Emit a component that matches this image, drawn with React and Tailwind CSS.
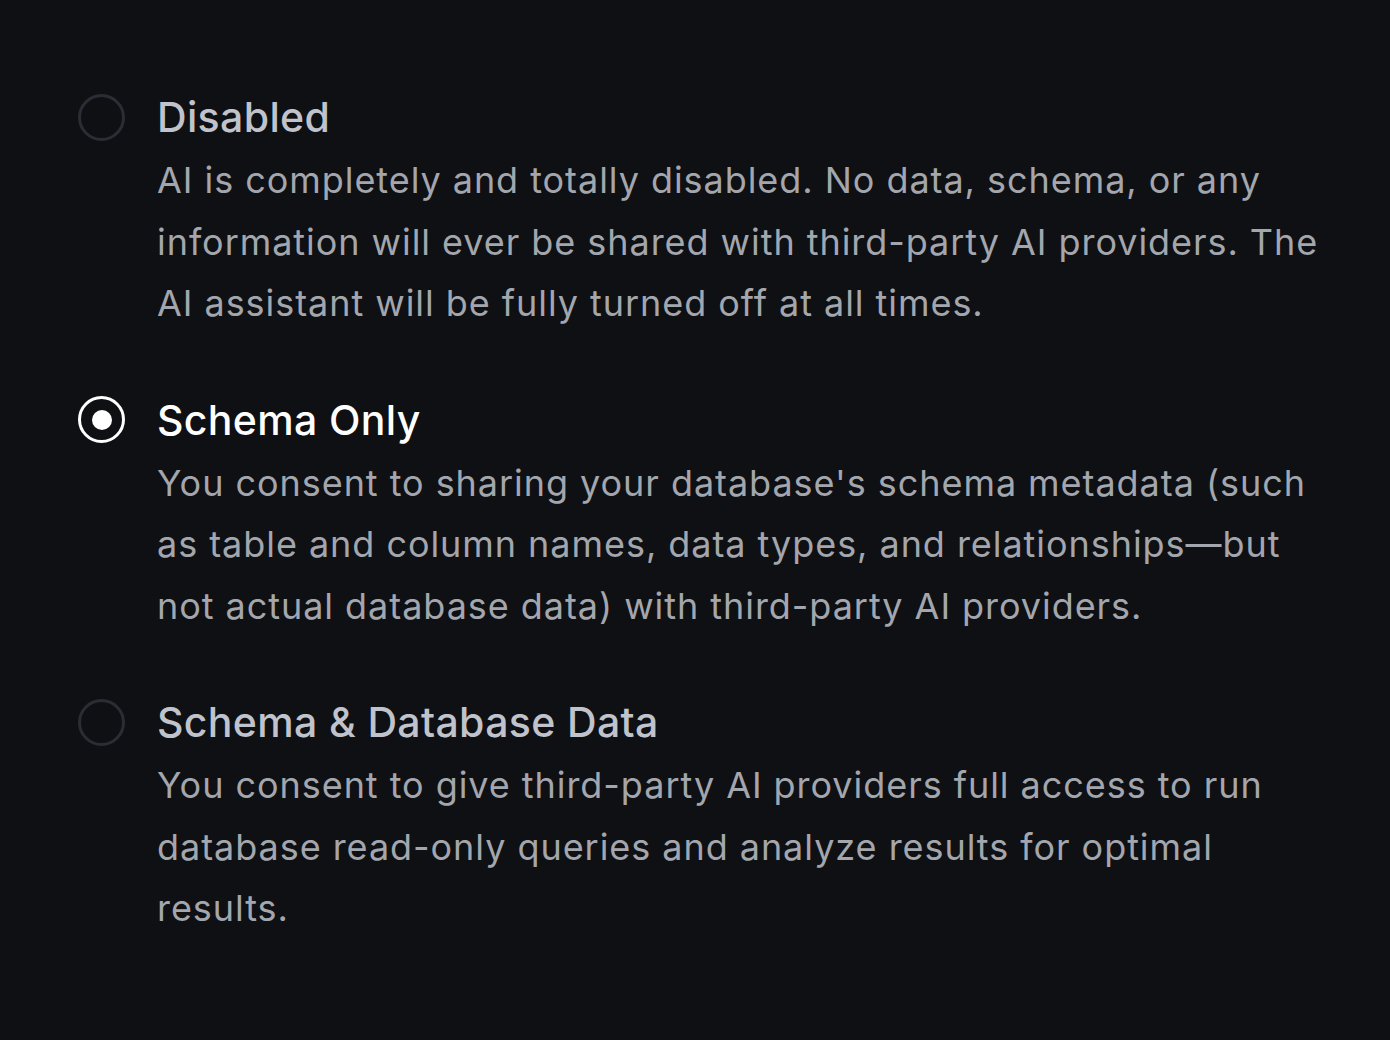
import React from "react";

const options = [
  {
    title: "Disabled",
    desc: "AI is completely and totally disabled. No data, schema, or any information will ever be shared with third-party AI providers. The AI assistant will be fully turned off at all times.",
    selected: false,
  },
  {
    title: "Schema Only",
    desc: "You consent to sharing your database's schema metadata (such as table and column names, data types, and relationships—but not actual database data) with third-party AI providers.",
    selected: true,
  },
  {
    title: "Schema & Database Data",
    desc: "You consent to give third-party AI providers full access to run database read-only queries and analyze results for optimal results.",
    selected: false,
  },
];

function Radio({ selected }) {
  return selected ? (
    <div className="w-[47px] h-[47px] rounded-full border-[3.5px] border-white flex items-center justify-center shrink-0">
      <div className="w-[20px] h-[20px] rounded-full bg-white" />
    </div>
  ) : (
    <div className="w-[47px] h-[47px] rounded-full border-[3px] border-[#2a2d33] shrink-0" />
  );
}

export default function App() {
  return (
    <div
      className="w-[1390px] h-[1040px] bg-[#0e1013] pt-[86px] pl-[78px] pr-[20px] flex flex-col gap-[54px]"
      style={{ fontFamily: "Inter, 'Noto Sans', sans-serif" }}
    >
      {options.map((o) => (
        <div key={o.title} className="flex gap-[32px]">
          <div className="h-[64px] flex items-center -mt-[1px]">
            <Radio selected={o.selected} />
          </div>
          <div className="flex flex-col w-[1176px]">
            <div
              className={`h-[64px] flex items-center text-[41px] font-medium tracking-[0.35px] ${
                o.selected ? "text-white" : "text-[#c0c3cb]"
              }`}
            >
              {o.title}
            </div>
            <p className="text-[36px] leading-[61.5px] tracking-[0.95px] text-[#a3a6ad]">
              {o.desc}
            </p>
          </div>
        </div>
      ))}
    </div>
  );
}
